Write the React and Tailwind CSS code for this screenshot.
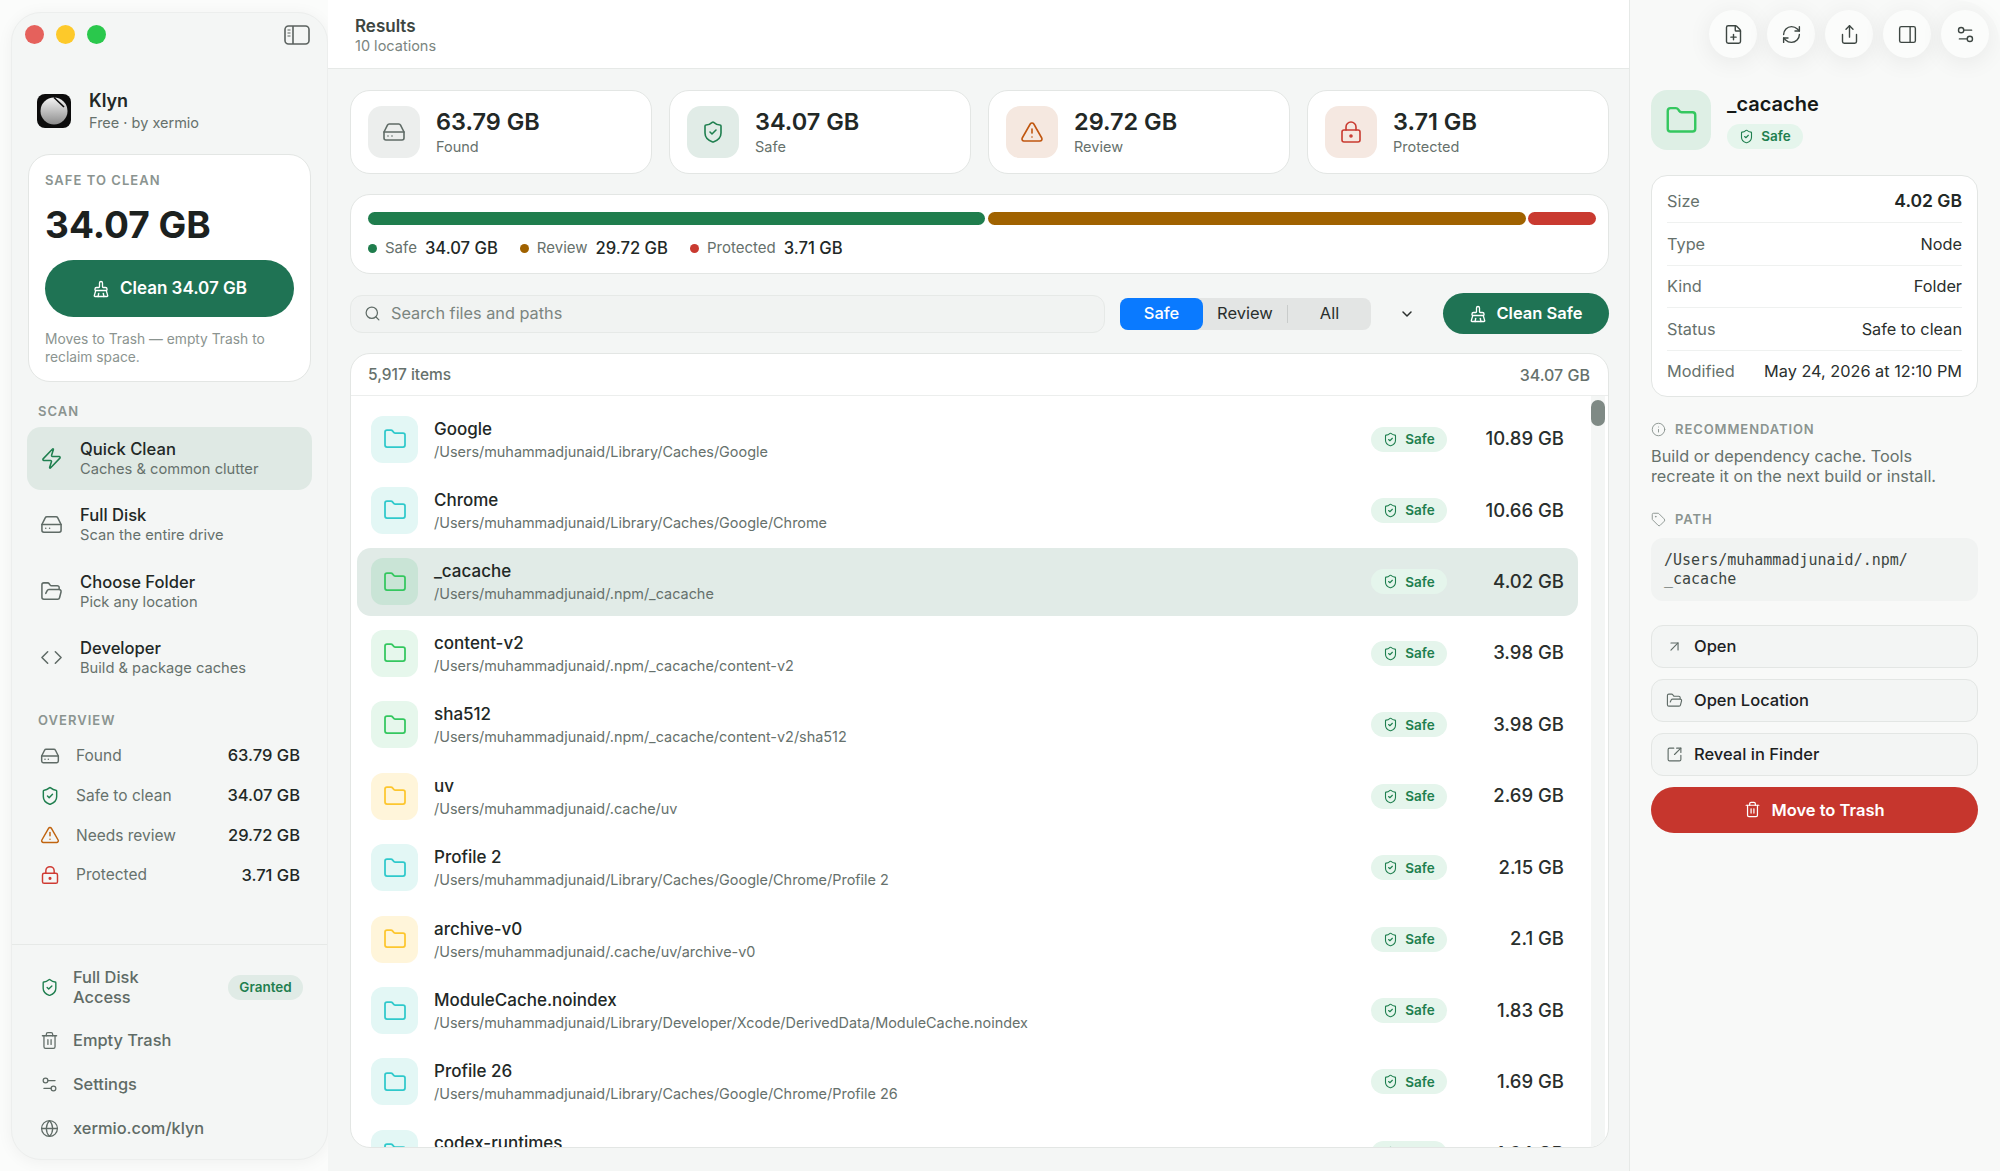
import React from 'react'
import {
  ArrowUpRight, BrushCleaning, ChevronDown, Code, FilePlus, Folder, FolderOpen, Globe, HardDrive,
  Info, LockKeyhole, PanelRight, RefreshCw, Search, Settings2, Share, ShieldCheck,
  SquareArrowOutUpRight, Tag, Trash2, TriangleAlert, Zap,
} from 'lucide-react'

const scans = [
  { icon: Zap, title: 'Quick Clean', sub: 'Caches & common clutter', active: true },
  { icon: HardDrive, title: 'Full Disk', sub: 'Scan the entire drive' },
  { icon: FolderOpen, title: 'Choose Folder', sub: 'Pick any location' },
  { icon: Code, title: 'Developer', sub: 'Build & package caches' },
]

const overview = [
  { icon: HardDrive, label: 'Found', value: '63.79 GB', color: 'text-[#5f6b66]' },
  { icon: ShieldCheck, label: 'Safe to clean', value: '34.07 GB', color: 'text-[#1f7f4f]' },
  { icon: TriangleAlert, label: 'Needs review', value: '29.72 GB', color: 'text-[#c0640f]' },
  { icon: LockKeyhole, label: 'Protected', value: '3.71 GB', color: 'text-[#cf3a32]' },
]

const stats = [
  { icon: HardDrive, value: '63.79 GB', label: 'Found', box: 'bg-[#eceeed]', color: 'text-[#5f6b66]' },
  { icon: ShieldCheck, value: '34.07 GB', label: 'Safe', box: 'bg-[#e1ece7]', color: 'text-[#1f7f4f]' },
  { icon: TriangleAlert, value: '29.72 GB', label: 'Review', box: 'bg-[#f5e8e0]', color: 'text-[#c0560f]' },
  { icon: LockKeyhole, value: '3.71 GB', label: 'Protected', box: 'bg-[#f5e8e1]', color: 'text-[#c93a30]' },
]

const cyan = { box: 'bg-[#e3f7f5]', color: 'text-[#2fc9cb]' }
const green = { box: 'bg-[#e6f7ec]', color: 'text-[#34c75f]' }
const yellow = { box: 'bg-[#fff5da]', color: 'text-[#fdc62e]' }

const rows = [
  { name: 'Google', path: '/Users/muhammadjunaid/Library/Caches/Google', size: '10.89 GB', ...cyan },
  { name: 'Chrome', path: '/Users/muhammadjunaid/Library/Caches/Google/Chrome', size: '10.66 GB', ...cyan },
  { name: '_cacache', path: '/Users/muhammadjunaid/.npm/_cacache', size: '4.02 GB', ...green, selected: true },
  { name: 'content-v2', path: '/Users/muhammadjunaid/.npm/_cacache/content-v2', size: '3.98 GB', ...green },
  { name: 'sha512', path: '/Users/muhammadjunaid/.npm/_cacache/content-v2/sha512', size: '3.98 GB', ...green },
  { name: 'uv', path: '/Users/muhammadjunaid/.cache/uv', size: '2.69 GB', ...yellow },
  { name: 'Profile 2', path: '/Users/muhammadjunaid/Library/Caches/Google/Chrome/Profile 2', size: '2.15 GB', ...cyan },
  { name: 'archive-v0', path: '/Users/muhammadjunaid/.cache/uv/archive-v0', size: '2.1 GB', ...yellow },
  { name: 'ModuleCache.noindex', path: '/Users/muhammadjunaid/Library/Developer/Xcode/DerivedData/ModuleCache.noindex', size: '1.83 GB', ...cyan },
  { name: 'Profile 26', path: '/Users/muhammadjunaid/Library/Caches/Google/Chrome/Profile 26', size: '1.69 GB', ...cyan },
  { name: 'codex-runtimes', path: '/Users/muhammadjunaid/.cache/codex-runtimes', size: '1.64 GB', ...cyan },
]

const details = [
  { label: 'Size', value: '4.02 GB', strong: true },
  { label: 'Type', value: 'Node' },
  { label: 'Kind', value: 'Folder' },
  { label: 'Status', value: 'Safe to clean' },
  { label: 'Modified', value: 'May 24, 2026 at 12:10 PM' },
]

const legend = [
  { dot: 'bg-[#1f7d4d]', label: 'Safe', value: '34.07 GB' },
  { dot: 'bg-[#a06200]', label: 'Review', value: '29.72 GB' },
  { dot: 'bg-[#c93a30]', label: 'Protected', value: '3.71 GB' },
]

const SafeBadge = () => (
  <span className="flex h-[25px] w-[76px] items-center justify-center gap-[7px] rounded-full bg-[#e5f5ec] text-[13.5px] font-semibold text-[#1f7f4f]">
    <ShieldCheck size={15} strokeWidth={1.75} /> Safe
  </span>
)

const Logo = () => (
  <svg width="34" height="34" viewBox="0 0 34 34">
    <defs>
      <linearGradient id="logoFill" x1="0" y1="0" x2="0" y2="1">
        <stop offset="0" stopColor="#f4f4f4" />
        <stop offset="1" stopColor="#8c8c8c" />
      </linearGradient>
    </defs>
    <rect width="34" height="34" rx="8" fill="#0c0c0c" />
    <circle cx="17" cy="17" r="13.5" fill="url(#logoFill)" />
    <path d="M17 3.5 L27 13" stroke="#0c0c0c" strokeWidth="1.6" />
  </svg>
)

const Sidebar = () => (
  <aside className="flex w-[317px] shrink-0 flex-col rounded-[30px] border border-[#eceeed] bg-[#f4f6f5] shadow-[0_2px_16px_rgba(0,0,0,0.05)]">
    <div className="flex h-[43px] shrink-0 items-center justify-between pl-[13px] pr-[17px]">
      <div className="flex items-center gap-[12px]">
        <span className="h-[19px] w-[19px] rounded-full bg-[#e5615c]" />
        <span className="h-[19px] w-[19px] rounded-full bg-[#fdc92a]" />
        <span className="h-[19px] w-[19px] rounded-full bg-[#2ac84c]" />
      </div>
      <svg width="26" height="20" viewBox="0 0 26 20" fill="none" stroke="#5b625f" strokeWidth="1.6">
        <rect x="1" y="1" width="24" height="18" rx="3.5" />
        <path d="M9 1v18" />
        <path d="M3.5 5h3M3.5 8h3M3.5 11h3" strokeWidth="1.2" />
      </svg>
    </div>

    <div className="mt-[38px] flex h-[34px] items-center gap-[18px] pl-[25px]">
      <Logo />
      <div>
        <div className="text-[18px] font-semibold leading-[22px] text-[#222826]">Klyn</div>
        <div className="text-[14.5px] leading-[21px] text-[#66716c]">Free · by xermio</div>
      </div>
    </div>

    <div className="mx-[16px] mt-[26px] h-[228px] rounded-[22px] border border-[#e3e6e4] bg-white px-[16px] pt-[16px]">
      <div className="text-[13px] font-semibold leading-[18px] tracking-[0.08em] text-[#8b9490]">SAFE TO CLEAN</div>
      <div className="mt-[14px] text-[37px] font-bold leading-[44px] text-[#1c211f]">34.07 GB</div>
      <button className="mt-[13px] flex h-[57px] w-full items-center justify-center gap-[10px] rounded-full bg-[#1f7354] text-[17px] font-semibold text-white">
        <BrushCleaning size={18} strokeWidth={1.75} /> Clean 34.07 GB
      </button>
      <p className="mt-[14px] text-[13.8px] leading-[17.5px] text-[#8b9490]">Moves to Trash — empty Trash to reclaim space.</p>
    </div>

    <div className="mt-[21px] pl-[26px] text-[13px] font-semibold leading-[16px] tracking-[0.08em] text-[#8b9490]">SCAN</div>
    <div className="mt-[8px] flex flex-col gap-[4px] px-[15px]">
      {scans.map((s) => (
        <div key={s.title} className={`flex h-[62.5px] items-center gap-[17px] rounded-[14px] pl-[13px] ${s.active ? 'bg-[#dfe9e4]' : ''}`}>
          <s.icon size={23} strokeWidth={1.6} className={s.active ? 'text-[#1f7f4f]' : 'text-[#5f6b66]'} />
          <div className="pt-[1px]">
            <div className="text-[16.6px] font-medium leading-[20px] text-[#222826]">{s.title}</div>
            <div className="text-[14.7px] leading-[20px] text-[#66716c]">{s.sub}</div>
          </div>
        </div>
      ))}
    </div>

    <div className="mt-[23px] pl-[26px] text-[13px] font-semibold leading-[16px] tracking-[0.08em] text-[#8b9490]">OVERVIEW</div>
    <div className="mt-[8px] flex flex-col pl-[28px] pr-[27px]">
      {overview.map((o) => (
        <div key={o.label} className="flex h-[39.7px] items-center">
          <o.icon size={20} strokeWidth={1.75} className={o.color} />
          <span className="ml-[16px] text-[15.5px] text-[#66716c]">{o.label}</span>
          <span className="ml-auto text-[16.5px] font-medium text-[#222826]">{o.value}</span>
        </div>
      ))}
    </div>

    <div className="mt-auto border-t border-[#e6e9e7] pb-[9px] pl-[28px] pr-[24px] pt-[19px] text-[16.4px] font-medium text-[#5f6b66]">
      <div className="mb-[8px] flex h-[46px] items-center">
        <ShieldCheck size={19} strokeWidth={1.75} className="text-[#1f7f4f]" />
        <span className="ml-[14px] w-[90px] leading-[20px]">Full Disk Access</span>
        <span className="ml-auto flex h-[25px] w-[75px] items-center justify-center rounded-full bg-[#e0ebe6] text-[13.5px] font-semibold text-[#1f7f4f]">Granted</span>
      </div>
      <div className="flex h-[44px] items-center gap-[14px]"><Trash2 size={19} strokeWidth={1.6} />Empty Trash</div>
      <div className="flex h-[44px] items-center gap-[14px]"><Settings2 size={19} strokeWidth={1.6} />Settings</div>
      <div className="flex h-[44px] items-center gap-[14px]"><Globe size={19} strokeWidth={1.6} />xermio.com/klyn</div>
    </div>
  </aside>
)

const FileRow = ({ row }) => (
  <div className={`flex h-[68px] shrink-0 items-center rounded-[14px] pl-[14px] pr-[14px] ${row.selected ? 'bg-[#e1ebe7]' : ''}`}>
    <div className={`flex h-[47px] w-[47px] items-center justify-center rounded-[12px] ${row.selected ? 'bg-[#c9e4d6]' : row.box}`}>
      <Folder size={24} strokeWidth={1.75} className={row.color} />
    </div>
    <div className="ml-[16px] min-w-0 flex-1 pt-[1px]">
      <div className="text-[17px] font-medium leading-[24px] text-[#222826]">{row.name}</div>
      <div className="text-[14.43px] leading-[22px] text-[#66716c]">{row.path}</div>
    </div>
    <SafeBadge />
    <div className="w-[117px] text-right text-[18.5px] font-medium text-[#2a2f2d]">{row.size}</div>
  </div>
)

const Main = () => (
  <main className="flex min-w-0 flex-1 flex-col">
    <header className="flex h-[69px] shrink-0 flex-col justify-center border-b border-[#e6e9e7] bg-white pl-[27px] pt-[2px]">
      <div className="text-[17px] font-semibold leading-[22px] text-[#3d4642]">Results</div>
      <div className="text-[14.5px] leading-[18px] text-[#7b8580]">10 locations</div>
    </header>

    <div className="flex min-h-0 flex-1 flex-col bg-[#f4f6f5] pb-[23px] pl-[22px] pr-[20px] pt-[21px]">
      <div className="grid shrink-0 grid-cols-4 gap-[17px]">
        {stats.map((s) => (
          <div key={s.label} className="flex h-[84px] items-center gap-[16px] rounded-[20px] border border-[#e3e6e4] bg-white pl-[17px]">
            <div className={`flex h-[52px] w-[52px] items-center justify-center rounded-[14px] ${s.box}`}>
              <s.icon size={24} strokeWidth={1.6} className={s.color} />
            </div>
            <div>
              <div className="text-[23.5px] font-semibold leading-[30px] text-[#222826]">{s.value}</div>
              <div className="text-[14.5px] leading-[20px] text-[#66716c]">{s.label}</div>
            </div>
          </div>
        ))}
      </div>

      <div className="mt-[20px] h-[80px] shrink-0 rounded-[20px] border border-[#e3e6e4] bg-white pl-[17px] pr-[12px] pt-[17px]">
        <div className="flex h-[13px] gap-[2.5px]">
          <div className="w-[617px] rounded-full bg-[#1f7d4d]" />
          <div className="w-[538px] rounded-full bg-[#a06200]" />
          <div className="flex-1 rounded-full bg-[#c93a30]" />
        </div>
        <div className="mt-[13px] flex h-[20px] items-center gap-[22px]">
          {legend.map((l) => (
            <div key={l.label} className="flex items-center">
              <span className={`h-[9px] w-[9px] rounded-full ${l.dot}`} />
              <span className="ml-[8px] text-[15px] text-[#66716c]">{l.label}</span>
              <span className="ml-[8px] text-[16.6px] font-medium text-[#222826]">{l.value}</span>
            </div>
          ))}
        </div>
      </div>

      <div className="mt-[19px] flex h-[41px] shrink-0 items-center">
        <div className="flex h-[38px] w-[755px] items-center gap-[10px] rounded-[12px] border border-[#e6e9e7] bg-[#f1f3f2] pl-[13px] text-[16.3px] text-[#7b8580]">
          <Search size={17} strokeWidth={1.75} className="text-[#5f6b66]" />
          Search files and paths
        </div>
        <div className="ml-[15px] flex h-[32px] w-[251px] items-center rounded-[8px] bg-[#e3e5e4] text-[16.5px] text-[#2a2f2d]">
          <div className="flex h-full w-[83px] items-center justify-center rounded-[8px] bg-[#0a7aff] font-medium text-white">Safe</div>
          <div className="flex h-[18px] w-[85px] items-center justify-center border-r border-[#c9cccb]">Review</div>
          <div className="flex flex-1 items-center justify-center">All</div>
        </div>
        <ChevronDown size={16} strokeWidth={2.25} className="ml-[28px] text-[#2a2f2d]" />
        <button className="ml-auto flex h-[41px] w-[166px] items-center justify-center gap-[9px] rounded-full bg-[#1f7354] text-[16.5px] font-semibold text-white">
          <BrushCleaning size={18} strokeWidth={1.75} /> Clean Safe
        </button>
      </div>

      <section className="mt-[19px] flex min-h-0 flex-1 flex-col overflow-hidden rounded-[20px] border border-[#e3e6e4] bg-white">
        <div className="flex h-[42px] shrink-0 items-center justify-between border-b border-[#eceeed] pl-[17px] pr-[18px] font-medium text-[#66716c]">
          <span className="text-[15.5px]">5,917 items</span>
          <span className="text-[16px]">34.07 GB</span>
        </div>
        <div className="relative min-h-0 flex-1 overflow-hidden">
          <div className="flex flex-col gap-[3.45px] pl-[6px] pr-[30px] pt-[9px]">
            {rows.map((r) => <FileRow key={r.name} row={r} />)}
          </div>
          {/* scrollbar */}
          <div className="absolute bottom-0 right-[3px] top-0 w-[14px] bg-[#f4f6f5]">
            <div className="mt-[4px] h-[26px] rounded-full bg-[#7f8a85]" />
          </div>
        </div>
      </section>
    </div>
  </main>
)

const Inspector = () => (
  <aside className="flex w-[371px] shrink-0 flex-col rounded-tr-[44px] border-l border-[#e6e9e7] bg-[#f8f9f8] pl-[21px] pr-[22px]">
    <div className="-mr-[11px] mt-[10px] flex justify-end gap-[10px]">
      {[FilePlus, RefreshCw, Share, PanelRight, Settings2].map((Icon, i) => (
        <button key={i} className="flex h-[48px] w-[48px] items-center justify-center rounded-full bg-[#fbfcfb] text-[#3d4642] shadow-[0_4px_24px_rgba(0,0,0,0.07)]">
          <Icon size={21} strokeWidth={1.6} />
        </button>
      ))}
    </div>

    <div className="mt-[32px] flex h-[60px] items-center gap-[16px]">
      <div className="flex h-[60px] w-[60px] items-center justify-center rounded-[16px] bg-[#deefe5]">
        <Folder size={33} strokeWidth={1.75} className="text-[#34c75f]" />
      </div>
      <div>
        <div className="text-[20px] font-semibold leading-[26px] text-[#151917]">_cacache</div>
        <div className="mt-[7px]"><SafeBadge /></div>
      </div>
    </div>

    <div className="mt-[25px] rounded-[16px] border border-[#e3e6e4] bg-white px-[15px] py-[4px]">
      {details.map((d, i) => (
        <div key={d.label} className={`flex h-[42.4px] items-center justify-between text-[16.3px] ${i ? 'border-t border-[#eff1f0]' : ''}`}>
          <span className="text-[#66716c]">{d.label}</span>
          <span className={d.strong ? 'text-[17.5px] font-semibold text-[#222826]' : 'text-[#2a2f2d]'}>{d.value}</span>
        </div>
      ))}
    </div>

    <div className="mt-[25px] flex h-[16px] items-center gap-[9px] text-[13px] font-semibold tracking-[0.07em] text-[#8b9490]">
      <Info size={15} strokeWidth={1.5} /> RECOMMENDATION
    </div>
    <p className="mt-[8px] max-w-[300px] text-[16.3px] leading-[20.5px] text-[#66716c]">Build or dependency cache. Tools recreate it on the next build or install.</p>

    <div className="mt-[25px] flex h-[16px] items-center gap-[9px] text-[13px] font-semibold tracking-[0.07em] text-[#8b9490]">
      <Tag size={15} strokeWidth={1.5} /> PATH
    </div>
    <div className="mt-[10px] h-[63px] rounded-[12px] bg-[#f1f3f2] pl-[13px] pr-[14px] pt-[13px] font-['DejaVu_Sans_Mono',monospace] text-[15px] leading-[19px] text-[#3d4642]">
      /Users/muhammadjunaid/.npm/<br />_cacache
    </div>

    <div className="mt-[24px] flex flex-col gap-[11px]">
      <ActionButton icon={ArrowUpRight} label="Open" />
      <ActionButton icon={FolderOpen} label="Open Location" />
      <ActionButton icon={SquareArrowOutUpRight} label="Reveal in Finder" />
    </div>
    <button className="mt-[11px] flex h-[46px] items-center justify-center gap-[10px] rounded-full bg-[#c6362d] text-[16.5px] font-semibold text-white">
      <Trash2 size={17} strokeWidth={1.75} /> Move to Trash
    </button>
  </aside>
)

const ActionButton = ({ icon: Icon, label }) => (
  <button className="flex h-[43px] items-center gap-[11px] rounded-[12px] border border-[#e3e6e4] bg-[#f3f5f4] pl-[14px] text-[16.5px] font-medium text-[#1c211f]">
    <Icon size={17} strokeWidth={1.6} className="text-[#5f6b66]" />
    {label}
  </button>
)

export default function App() {
  return (
    <div className="flex h-screen w-full overflow-hidden bg-[#fbfcfb] font-[Inter,sans-serif]">
      <div className="flex shrink-0 pb-[11px] pl-[11px] pt-[12px]">
        <Sidebar />
      </div>
      <Main />
      <Inspector />
    </div>
  )
}
